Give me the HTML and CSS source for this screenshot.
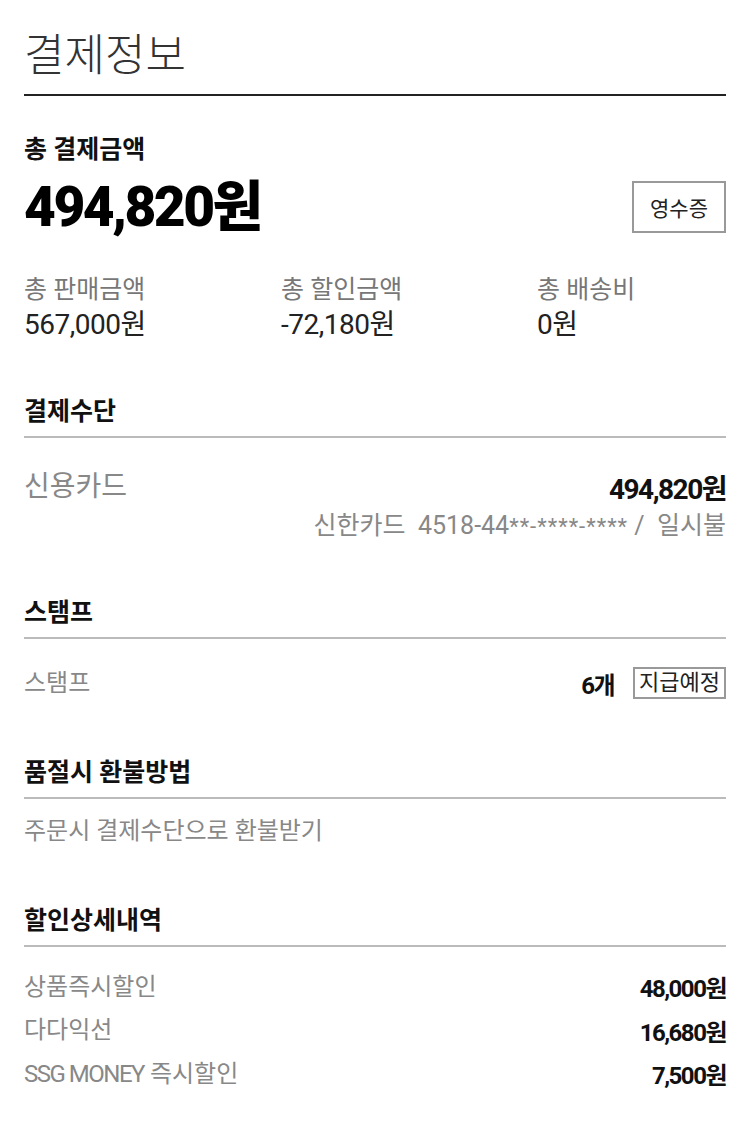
FILE: index.html
```html
<!DOCTYPE html>
<html lang="ko">
<head>
  <meta charset="UTF-8" />
  <meta name="viewport" content="width=device-width, initial-scale=1.0" />
  <title>결제정보</title>
  <link rel="stylesheet" href="styles.css">
</head>
<body>
  <main class="payment">
    <!-- 제목 -->
    <h1 class="page-title">결제정보</h1>

    <!-- 총 결제금액 -->
    <div class="total">
      <h3 class="total-label">총 결제금액</h3>
      <div class="total-row">
        <strong class="total-price">494,820원</strong>
        <button class="btn-receipt">영수증</button>
      </div>
      <div class="summary">
        <div class="summary-item">
          <span class="summary-label">총 판매금액</span>
          <span class="summary-value">567,000원</span>
        </div>
        <div class="summary-item">
          <span class="summary-label">총 할인금액</span>
          <span class="summary-value">-72,180원</span>
        </div>
        <div class="summary-item">
          <span class="summary-label">총 배송비</span>
          <span class="summary-value">0원</span>
        </div>
      </div>
    </div>

    <!-- 결제수단 -->
    <section class="section">
      <h3 class="section-title">결제수단</h3>
      <div class="section-body body-pay">
        <div class="row row-large">
          <span class="row-label">신용카드</span>
          <span class="row-value">494,820원</span>
        </div>
        <p class="card-info">신한카드&nbsp; 4518-44<span class="mask">**-****-****</span> /&nbsp; 일시불</p>
      </div>
    </section>

    <!-- 스탬프 -->
    <section class="section section-stamp">
      <h3 class="section-title">스탬프</h3>
      <div class="section-body body-stamp">
        <div class="row">
          <span class="row-label">스탬프</span>
          <span class="row-value">6개 <span class="tag">지급예정</span></span>
        </div>
      </div>
    </section>

    <!-- 품절시 환불방법 -->
    <section class="section">
      <h3 class="section-title">품절시 환불방법</h3>
      <div class="section-body body-refund">
        <p class="row-label">주문시 결제수단으로 환불받기</p>
      </div>
    </section>

    <!-- 할인상세내역 -->
    <section class="section">
      <h3 class="section-title">할인상세내역</h3>
      <div class="section-body body-discount">
        <div class="row">
          <span class="row-label">상품즉시할인</span>
          <span class="row-value">48,000원</span>
        </div>
        <div class="row">
          <span class="row-label">다다익선</span>
          <span class="row-value">16,680원</span>
        </div>
        <div class="row">
          <span class="row-label"><span class="latin">SSG MONEY</span> 즉시할인</span>
          <span class="row-value">7,500원</span>
        </div>
      </div>
    </section>
  </main>
</body>
</html>
```

FILE: styles.css
```css
* {
  margin: 0;
  padding: 0;
  box-sizing: border-box;
  font-family: Roboto, "Noto Sans CJK KR", sans-serif;
}
body {
  background-color: #fff;
  color: #222;
}
.payment {
  padding: 30px 24px 40px;
}
.page-title {
  font-size: 44px;
  font-weight: 300;
  color: #333;
  line-height: 52px;
  padding-bottom: 12px;
  border-bottom: 2px solid #222;
}
.total {
  padding-top: 39px;
}
.total-label {
  font-size: 25px;
  font-weight: 700;
  line-height: 30px;
  color: #111;
}
.total-row {
  display: flex;
  justify-content: space-between;
  align-items: center;
  margin-top: 14px;
}
.total-price {
  font-size: 55px;
  font-weight: 900;
  letter-spacing: -2.5px;
  color: #000;
  line-height: 56px;
}
.btn-receipt {
  width: 94px;
  height: 52px;
  border: 2px solid #999;
  background: #fff;
  font-size: 21px;
  color: #222;
}
.summary {
  display: grid;
  grid-template-columns: 257px 256px 1fr;
  margin-top: 40px;
}
.summary-item {
  display: flex;
  flex-direction: column;
  gap: 3px;
}
.summary-label {
  font-size: 25px;
  color: #777;
  line-height: 30px;
}
.summary-value {
  font-size: 28px;
  letter-spacing: -0.5px;
  color: #222;
  line-height: 34px;
}
.section {
  padding-top: 55px;
}
.section-stamp {
  padding-top: 53px;
}
.section-title {
  font-size: 25px;
  font-weight: 700;
  line-height: 30px;
  color: #111;
  padding-bottom: 9px;
  border-bottom: 2px solid #bbb;
}
.body-pay { padding-top: 23px; }
.body-stamp { padding-top: 24px; }
.body-refund { padding-top: 12px; }
.body-discount { padding-top: 18px; }
.row {
  display: flex;
  justify-content: space-between;
  align-items: center;
  height: 40px;
}
.body-discount .row {
  height: 43.5px;
}
.row-large {
  height: 52px;
}
.row-label {
  font-size: 24px;
  color: #888;
  line-height: 40px;
}
.row-large .row-label {
  font-size: 28px;
}
.latin {
  letter-spacing: -1.5px;
}
.row-value {
  font-size: 24px;
  font-weight: 700;
  letter-spacing: -1.5px;
  color: #111;
  display: flex;
  align-items: center;
  gap: 19px;
}
.row-large .row-value {
  font-size: 28px;
}
.tag {
  font-size: 22px;
  font-weight: 400;
  letter-spacing: 0;
  border: 2px solid #999;
  line-height: 28px;
  padding: 0 4px;
  color: #222;
}
.card-info {
  text-align: right;
  font-size: 25px;
  color: #888;
  line-height: 36px;
  margin-top: -5px;
}
.mask {
  font-size: 22px;
  letter-spacing: 1px;
}
```
